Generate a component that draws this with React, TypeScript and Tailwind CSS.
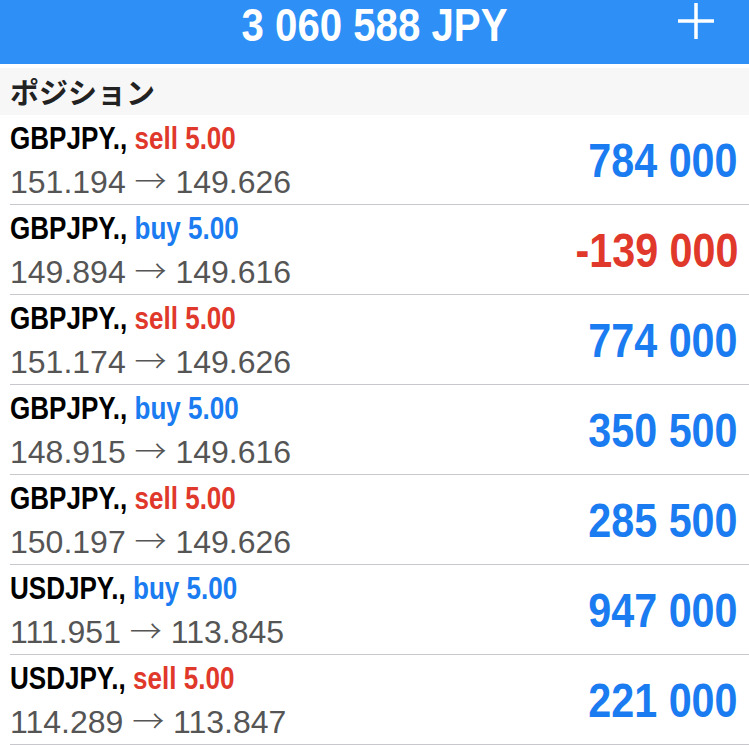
import React from 'react';

const positions = [
  { symbol: 'GBPJPY.', side: 'sell', open: '151.194', current: '149.626', profit: '784 000' },
  { symbol: 'GBPJPY.', side: 'buy', open: '149.894', current: '149.616', profit: '-139 000' },
  { symbol: 'GBPJPY.', side: 'sell', open: '151.174', current: '149.626', profit: '774 000' },
  { symbol: 'GBPJPY.', side: 'buy', open: '148.915', current: '149.616', profit: '350 500' },
  { symbol: 'GBPJPY.', side: 'sell', open: '150.197', current: '149.626', profit: '285 500' },
  { symbol: 'USDJPY.', side: 'buy', open: '111.951', current: '113.845', profit: '947 000' },
  { symbol: 'USDJPY.', side: 'sell', open: '114.289', current: '113.847', profit: '221 000' },
];

const App = () => {
  return (
    <div className="w-[749px] h-[745px] overflow-hidden bg-white" style={{ fontFamily: '"Liberation Sans", Arial, sans-serif' }}>
      {/* top bar */}
      <div className="relative h-[64px] bg-[#2e90f6] flex items-start justify-center">
        <h1 className="mt-[1px] text-white font-bold text-[47px] leading-none inline-block scale-x-[0.855] whitespace-nowrap">
          3 060 588 JPY
        </h1>
        <button className="absolute right-[35px] top-[3px] w-[36px] h-[36px] flex items-center justify-center">
          <svg width="36" height="36" viewBox="0 0 36 36">
            <path d="M18 0v36M0 18h36" stroke="white" strokeWidth="3.5" />
          </svg>
        </button>
      </div>

      {/* section header */}
      <div className="mt-[4px] h-[47px] bg-[#f7f7f7] flex items-center pl-[10px]">
        <span className="text-[29px] font-semibold text-[#222]" style={{ fontFamily: '"Noto Sans CJK JP", sans-serif' }}>
          ポジション
        </span>
      </div>

      {/* positions */}
      <div>
        {positions.map((p, i) => (
          <div key={i} className="pl-[10px]">
            <div className="h-[90px] flex items-start justify-between pr-[11px] border-b border-[#c8c7cc]">
              <div className="flex flex-col pt-[6px]">
                <div className="text-[31px] leading-[36px] font-bold inline-block scale-x-[0.84] origin-left whitespace-nowrap">
                  <span className="text-black">{p.symbol}, </span>
                  <span className={p.side === 'sell' ? 'text-[#e0392b]' : 'text-[#1a7cf0]'}>
                    {p.side} 5.00
                  </span>
                </div>
                <div className="mt-[5px] h-[40px] text-[32px] leading-[40px] text-[#555] whitespace-nowrap">
                  {p.open}{' '}
                  <span style={{ fontFamily: '"Noto Sans CJK JP", sans-serif' }} className="font-light leading-[0]">→</span>{' '}
                  {p.current}
                </div>
              </div>
              <div
                className={`mt-[22px] text-[48px] font-bold leading-none inline-block scale-x-[0.86] origin-right whitespace-nowrap ${
                  p.profit.startsWith('-') ? 'text-[#e0392b]' : 'text-[#1a7cf0]'
                }`}
              >
                {p.profit}
              </div>
            </div>
          </div>
        ))}
      </div>
    </div>
  );
};

export default App;
